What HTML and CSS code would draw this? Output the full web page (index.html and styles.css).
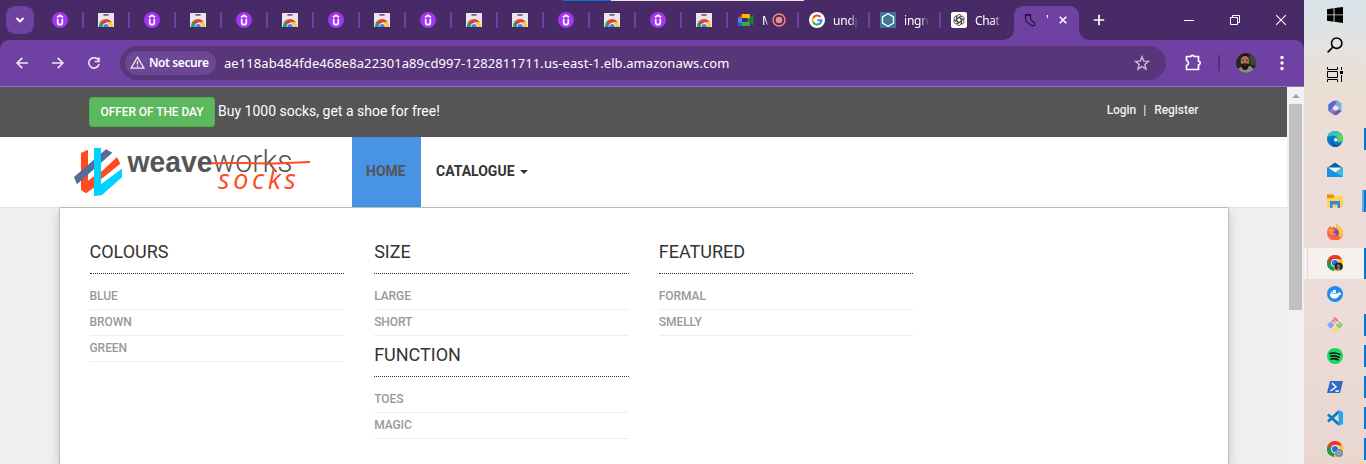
FILE: index.html
```
<!DOCTYPE html>
<html lang="en">
<head>
<meta charset="utf-8">
<title>WeaveSocks</title>
<link rel="stylesheet" href="styles.css">
</head>
<body>
<svg class="defs" width="0" height="0">
  <symbol id="udemy" viewBox="0 0 16 16"><circle cx="8" cy="8" r="8" fill="#a435f0"/><path d="M5 5.200 8 3.200l3 2M5.700 6.800v3.600a2.300 2.300 0 0 0 4.600 0V6.800" fill="none" stroke="#fff" stroke-width="1.700"/></symbol>
  <symbol id="store" viewBox="0 0 16 16"><path d="M0 1h16v14H0z" fill="#e8e8ea"/><path d="M5.500 2.300h5v1.300h-5z" fill="#47306a"/><path d="M1 15q-.2-3.500 2-6l3.500 3-1.500 3z" fill="#1da362"/><path d="M2.500 9.800Q4.500 7 8 7t5.700 3.200H9L5.500 12.500z" fill="#dc4437"/><path d="M9 10.200h5.200q1.200 2 1 4.800H10z" fill="#fcc934"/><path d="M4.600 15a3.500 3.700 0 0 1 7 0z" fill="#fff"/><path d="M5.300 15a2.800 3 0 0 1 5.600 0z" fill="#4285f4"/></symbol>
  <symbol id="chrome" viewBox="0 0 16 16"><circle cx="8" cy="8" r="8" fill="#fbc21c"/><path d="M8 8 7 16A8 8 0 0 1 1 4z" fill="#1d9b50"/><path d="M1 4a8 8 0 0 1 14 .3H8L4.800 9.500z" fill="#e33b2e"/><circle cx="8" cy="8" r="3.900" fill="#fff"/><circle cx="8" cy="8" r="3.100" fill="#1a73e8"/></symbol>
</svg>
<div class="screen">
  <div class="browser">
    <div class="tabstrip">
      <span class="progress"></span>
      <div class="tab-search"><svg width="28" height="28" viewBox="0 0 28 28"><path d="m10.500 12 3.500 3.500 3.500-3.500" fill="none" stroke="#fff" stroke-width="1.900"/></svg></div>
      <div class="tab"><svg width="16" height="16"><use href="#udemy"/></svg></div>
      <div class="tab"><svg width="16" height="16"><use href="#store"/></svg></div>
      <div class="tab"><svg width="16" height="16"><use href="#udemy"/></svg></div>
      <div class="tab"><svg width="16" height="16"><use href="#store"/></svg></div>
      <div class="tab"><svg width="16" height="16"><use href="#udemy"/></svg></div>
      <div class="tab"><svg width="16" height="16"><use href="#store"/></svg></div>
      <div class="tab"><svg width="16" height="16"><use href="#udemy"/></svg></div>
      <div class="tab"><svg width="16" height="16"><use href="#store"/></svg></div>
      <div class="tab"><svg width="16" height="16"><use href="#udemy"/></svg></div>
      <div class="tab"><svg width="16" height="16"><use href="#store"/></svg></div>
      <div class="tab"><svg width="16" height="16"><use href="#store"/></svg></div>
      <div class="tab"><svg width="16" height="16"><use href="#udemy"/></svg></div>
      <div class="tab"><svg width="16" height="16"><use href="#store"/></svg></div>
      <div class="tab"><svg width="16" height="16"><use href="#udemy"/></svg></div>
      <div class="tab"><svg width="16" height="16"><use href="#store"/></svg></div>
      <div class="tab wide">
        <svg width="16" height="16" viewBox="0 0 16 16"><path d="M4 2v4H0z" fill="#ea4335"/><path d="M4 2h7q1 0 1 1v5l-3-2H4z" fill="#fbbc04"/><path d="M0 6h4v5H0z" fill="#4285f4"/><path d="M0 11h4v3H1q-1 0-1-1z" fill="#1967d2"/><path d="M4 10h5l3-3v6q0 1-1 1H4z" fill="#34a853"/><path d="m9 8 5.500-5q1-.5 1 .5v9q0 1-1 .5z" fill="#188038"/></svg>
        <span class="tab-title meet">M</span>
        <svg class="rec" width="14" height="14" viewBox="0 0 14 14"><circle cx="7" cy="7" r="6" fill="none" stroke="#f28b82" stroke-width="1.400"/><circle cx="7" cy="7" r="3.300" fill="#f28b82"/></svg>
      </div>
      <div class="tab wide">
        <svg width="16" height="16" viewBox="0 0 16 16"><circle cx="8" cy="8" r="8" fill="#fff"/><g fill="none" stroke-width="2.100"><path d="M4.200 5.900A4.400 4.400 0 0 1 11.400 5" stroke="#ea4335"/><path d="M4.200 5.800a4.500 4.500 0 0 0 0 4.500" stroke="#fbbc04"/><path d="M4.100 10.100a4.400 4.400 0 0 0 7 1.200" stroke="#34a853"/><path d="M8.200 8.200h4.300a4.600 4.600 0 0 1-1.500 3.200" stroke="#4285f4"/></g></svg>
        <span class="tab-title">undp</span>
      </div>
      <div class="tab wide">
        <svg width="16" height="16" viewBox="0 0 16 16"><path d="M0 0h16v16H0z" fill="#417598"/><path d="m8 1.700 5.500 3.200v6.300L8 14.300l-5.500-3.200V4.900z" fill="none" stroke="#fff" stroke-width="1.300"/></svg>
        <span class="tab-title">ingre</span>
      </div>
      <div class="tab wide last">
        <svg width="16" height="16" viewBox="0 0 16 16"><rect width="16" height="16" rx="2" fill="#fff"/><g fill="none" stroke="#222" stroke-width=".75"><path id="petal" d="M6 9.200V4.700q0-2 2-2.200 1.400 0 2.300 1.100L6.800 5.800"/><use href="#petal" transform="rotate(60 8 8)"/><use href="#petal" transform="rotate(120 8 8)"/><use href="#petal" transform="rotate(180 8 8)"/><use href="#petal" transform="rotate(240 8 8)"/><use href="#petal" transform="rotate(300 8 8)"/></g></svg>
        <span class="tab-title chat">Chat</span>
      </div>
      <div class="tab-active">
        <svg width="16" height="16" viewBox="0 0 16 16"><path d="M3.500 2.500h5v4l.7 1.800 3 2.500q1.200 1.400-.2 2.500-1.500 1-3.300-.3L4.200 9.500l-.6-2z" fill="none" stroke="#27163c" stroke-width="1.200"/><path d="M3.500 3h5" stroke="#27163c" stroke-width="1.800"/></svg>
        <span class="tab-title sliver">'</span>
        <svg class="close" width="8" height="8" viewBox="0 0 8 8"><path d="m.7.7 6.600 6.600M7.300.7.700 7.300" stroke="#fff" stroke-width="1.600"/></svg>
      </div>
      <svg class="new-tab" width="12" height="12" viewBox="0 0 12 12"><path d="M6 .8v10.400M.8 6h10.400" stroke="#fff" stroke-width="1.700"/></svg>
      <div class="window-controls">
        <svg width="10" height="10"><path d="M0 5.500h10" stroke="#fff"/></svg>
        <svg width="10" height="10"><path d="M.5 2.500h7v7h-7zM2.500 2V.5h7v7H8" fill="none" stroke="#fff"/></svg>
        <svg width="10" height="10"><path d="m0 0 10 10M10 0 0 10" stroke="#fff" stroke-width="1.100"/></svg>
      </div>
    </div>
    <div class="toolbar">
      <div class="nav-buttons">
        <svg width="12" height="12" viewBox="0 0 12 12"><path d="M12 6H1.200M6.300.8 1.100 6l5.200 5.200" fill="none" stroke="#eee5f6" stroke-width="1.700"/></svg>
        <svg width="12" height="12" viewBox="0 0 12 12"><path d="M0 6h10.800M5.700.8 10.900 6l-5.200 5.200" fill="none" stroke="#eee5f6" stroke-width="1.700"/></svg>
        <svg width="12" height="12" viewBox="0 0 12 12"><path d="M10.300 2.900A5.200 5.200 0 1 0 11.100 7M11 .2v4.300H6.800" fill="none" stroke="#eee5f6" stroke-width="1.600"/></svg>
      </div>
      <div class="omnibox">
        <div class="chip"><svg width="15" height="13" viewBox="0 0 15 13"><path d="M7.500 1.200 13.900 12.200H1.100z" fill="none" stroke="#eee" stroke-width="1.300"/><path d="M7.500 5v3.500M7.500 9.500V11" stroke="#eee" stroke-width="1.300"/></svg><span>Not secure</span></div>
        <span class="url">ae118ab484fde468e8a22301a89cd997-1282811711.us-east-1.elb.amazonaws.com</span>
        <svg class="star" width="16" height="16" viewBox="0 0 16 16"><path d="m8 1.700 1.700 4.400 4.800.3-3.700 3 1.200 4.700L8 11.500l-4 2.600 1.200-4.700-3.700-3 4.800-.3z" fill="none" stroke="#cbbdd8" stroke-width="1.400"/></svg>
      </div>
      <svg class="puzzle" width="17" height="17" viewBox="0 0 17 17"><path d="M1.500 2.500h4.300q.2-1.200 1.700-1.200t1.700 1.200h4.300v4.700q1.700.2 1.700 1.800t-1.700 1.800v4.700h-12v-4q2-.5 2-2.500t-2-2.500z" fill="none" stroke="#fff" stroke-width="1.700" stroke-linejoin="round"/></svg>
      <span class="divider"></span>
      <svg class="avatar" width="20" height="20" viewBox="0 0 20 20"><clipPath id="round"><circle cx="10" cy="10" r="10"/></clipPath><g clip-path="url(#round)"><path d="M0 0h20v20H0z" fill="#26251f"/><path d="M13 2h7v10h-5z" fill="#3d4933"/><path d="m0 20 3-5 4-2h7l4 3 1 4z" fill="#829181"/><ellipse cx="9" cy="8.500" rx="4.300" ry="6" fill="#a87157"/><path d="M4.700 4Q5.500 1 9 1t4.300 3Q9 2 4.700 4zM5 11q4-1.500 8 0-.5 6-4 6t-4-6z" fill="#20130f"/><path d="M6 7.300h2.300M10 7.300h2.300M7.500 12.300h3" stroke="#4a2c23"/></g></svg>
      <svg class="dots" width="4" height="16"><circle cx="2" cy="2.500" r="1.700" fill="#fff"/><circle cx="2" cy="8" r="1.700" fill="#fff"/><circle cx="2" cy="13.500" r="1.700" fill="#fff"/></svg>
    </div>
    <div class="viewport">
      <div class="page">
        <div class="topbar">
          <div class="offer"><a class="btn">Offer of the day</a><span>Buy 1000 socks, get a shoe for free!</span></div>
          <div class="account"><span>Login</span><span class="bar">|</span><span>Register</span></div>
        </div>
        <div class="navbar">
          <svg class="logo" width="240" height="50" viewBox="0 0 240 50">
            <g transform="translate(0 1) scale(.33333) translate(-222 -204)">
              <path d="m243 219 21-10v93l18-13v34l-24 17-15-10z" fill="#ff4b1f"/>
              <path d="m303 276 48-45 10 20-58 47z" fill="#ff4b1f"/>
              <path d="m222 291 96-83 19 10-106 95z" fill="#566b98"/>
              <path d="M282 204h21v109l63-47v26l-61 54-23 2z" fill="#00d2ff"/>
            </g>
            <text class="weave" x="53.500" y="25" textLength="85" lengthAdjust="spacingAndGlyphs">weave</text>
            <text class="works" x="138.500" y="25" textLength="80" lengthAdjust="spacingAndGlyphs">works</text>
            <path d="m137 16.200 30-.2 33 .5 36-1.500" fill="none" stroke="#ff4b1f" stroke-width="2"/>
            <text class="socks" x="144" y="41.500" textLength="78">socks</text>
          </svg>
          <a class="nav-item home">Home</a>
          <a class="nav-item">Catalogue<span class="caret"></span></a>
        </div>
        <div class="mega">
          <div class="col"><h5>Colours</h5><ul><li>Blue</li><li>Brown</li><li>Green</li></ul></div>
          <div class="col"><h5>Size</h5><ul><li>Large</li><li>Short</li></ul><h5>Function</h5><ul><li>Toes</li><li>Magic</li></ul></div>
          <div class="col"><h5>Featured</h5><ul><li>Formal</li><li>Smelly</li></ul></div>
        </div>
      </div>
      <div class="scrollbar"><span class="up"></span><span class="thumb"></span></div>
    </div>
  </div>
  <div class="taskbar">
    <div class="system"><svg width="16" height="16" viewBox="0 0 16 16"><path d="M0 2.200 6.600 1.200v6.300H0zM7.500 1.100 16 0v7.500H7.500zM0 8.300h6.600v6.400L0 13.700zM7.500 8.300H16V16l-8.500-1.200z"/></svg></div>
    <div class="system"><svg width="16" height="16" viewBox="0 0 16 16"><circle cx="9.700" cy="6.200" r="5.200" fill="none" stroke="#000" stroke-width="1.600"/><path d="m6 10-5.400 5.400" stroke="#000" stroke-width="1.700"/></svg></div>
    <div class="system"><svg width="16" height="16" viewBox="0 0 16 16" fill="none" stroke="#000"><path d="M.5 0v2.500h10V0M.5 4.500h10v6H.5zM.5 15v-2.500h10V15M14.500 0v3M14.500 8v7"/><path d="M13 4h3v3h-3z" fill="#000" stroke="none"/></svg></div>
    <div class="app"><svg width="16" height="16" viewBox="0 0 16 16"><path d="m6 1 4-.5 4.500 3-3 3L8 5 5 9l-3.500 2V4.500z" fill="#6a5fd0"/><path d="m10 .5 4.500 3V11l-3 2.500V6.500L8 5z" fill="#77b2ee"/><path d="m1.500 11 3.500-2 4 2 2.500 2.500-4 2z" fill="#a466c9"/><path d="m9 11 2.500-1.500L14.500 11 10 15 7 14z" fill="#5064ad"/><path d="m1.500 4.500 3-2V9l-3 2z" fill="#3f73d4"/><circle cx="8.300" cy="7.800" r="2.100" fill="#f0e6e4"/></svg></div>
    <div class="app open"><svg width="16" height="16" viewBox="0 0 16 16"><circle cx="8" cy="8" r="8" fill="#0a78ce"/><path d="M.3 6A8 8 0 0 1 16 8c0 3-3.500 4-6 2.500q2-2 0-4.300Q6 2.800.3 6z" fill="#2fc3c1"/><path d="M10.500 1Q16 3 16 8c0 3-3.500 4-6 2.500q2-2 0-4z" fill="#56d657"/><path d="M6.300 7q-2.500 3 .5 6 3.500 2 7.500-.3A8 8 0 0 1 7 16Q2 11 6.300 7z" fill="#124f91"/><circle cx="8.700" cy="8.700" r="1.800" fill="#eaf5f8"/></svg></div>
    <div class="app"><svg width="16" height="16" viewBox="0 0 16 16"><path d="m0 6 8-5.500L16 6v5H0z" fill="#0960a6"/><path d="M1 5.500h14L8 11z" fill="#f6f6f6"/><path d="m0 5.500 8 5 8-5V15H0z" fill="#35bdee"/><path d="m0 5.500 16 9.500H0z" fill="#1595df"/></svg></div>
    <div class="app open stacked"><svg width="16" height="16" viewBox="0 0 16 16"><path d="M0 1.500h6L8 4l-2 2H0z" fill="#dc9707"/><path d="M0 5h6l2-2h8v11H0z" fill="#ffd257"/><path d="M3 8h10v7h-2.500v-3.500h-5V15H3z" fill="#348bd5"/></svg></div>
    <div class="app"><svg width="16" height="16" viewBox="0 0 16 16"><path d="M1.500 4 3 2l1.500 2L6 2.500 9 4q-.5-3 1.500-4 0 2 3 4 3 3.500 2.300 6.500A8 8 0 0 1 0 9q0-3 1.500-5z" fill="#ff643a"/><path d="M10.500 0q0 2 3 4 3 3.500 2.300 6.500-2 3-4.300 2.500 2-4-.5-7-2-2-2-3 0-2 1.500-3z" fill="#ffcd32"/><circle cx="8" cy="8.500" r="3.600" fill="#7548cc"/><path d="M1 6q2-2.500 6-.5l1.500 1.300-3 1q1 2.500 4.500 2-3 3-6 .5T1 6z" fill="#ff923d"/></svg></div>
    <div class="app open current"><svg width="16" height="16" viewBox="0 0 16 16"><use href="#chrome"/><circle cx="11.700" cy="11.500" r="4.100" fill="#25251c"/><path d="M10 9.500h3v4h-3z" fill="#8c624b"/><path d="M9 15q2.500-3 5 0z" fill="#91a28b"/></svg></div>
    <div class="app"><svg width="16" height="16" viewBox="0 0 16 16"><circle cx="8" cy="8" r="8" fill="#218cec"/><path d="M2.800 7.500h8.500q.2-1.500 1-2 1 .7.700 1.800 1-.1 1.500.4-.6 1.200-2.100 1.200Q11 12.500 7 12.500q-4 0-4.200-5zM4 5.700h5V7H4zM6 4h3v1.500H6z" fill="#fff"/></svg></div>
    <div class="app open"><svg width="16" height="16" viewBox="0 0 16 16"><path d="m8 0 3.500 3.500L8 7 4.500 3.500z" fill="#f27275"/><path d="M3.700 4.300 7.300 8l-3.600 3.700L0 8z" fill="#78a9ff"/><path d="M12.300 4.300 16 8l-3.700 3.700L8.700 8z" fill="#89c67a"/><path d="m8 9 3.500 3.500L8 16l-3.500-3.500z" fill="#ffd967"/><path d="m6 1.500 4.500 4.500M8 4v8M9 5l4 3" stroke="#eee0db" stroke-width="1"/></svg></div>
    <div class="app open"><svg width="16" height="16" viewBox="0 0 16 16"><circle cx="8" cy="8" r="8" fill="#1ed760"/><path d="M3 5.500q5-1.500 10 1M3.500 8.300q4.500-1.300 8.500 1M4 11q3.500-1 7 .8" fill="none" stroke="#111" stroke-width="1.600" stroke-linecap="round"/></svg></div>
    <div class="app open"><svg width="16" height="16" viewBox="0 0 16 16"><path d="M3 2h13l-3 12H0z" fill="#3369c5"/><path d="m5 4 4 4-5.500 4M8.500 12H12" fill="none" stroke="#fff" stroke-width="1.500"/></svg></div>
    <div class="app open"><svg width="16" height="16" viewBox="0 0 16 16"><path d="M1 4.500 12 14.500M1 11.500 12 1.500" stroke="#087abf" stroke-width="2.700"/><path d="m11.500 0 4.500 2v12l-4.500 2z" fill="#2aa6ee"/></svg></div>
    <div class="app open"><svg width="16" height="16" viewBox="0 0 16 16"><use href="#chrome"/><circle cx="12" cy="12" r="4" fill="#78909c"/><circle cx="12" cy="12" r="1.800" fill="none" stroke="#a8bac2"/></svg></div>
  </div>
</div>
</body>
</html>
```
FILE: styles.css
```
* { box-sizing: border-box; }
body { margin: 0; overflow: hidden; font-family: Roboto, "Liberation Sans", sans-serif; }
svg { display: block; flex: none; }
.defs { position: absolute; }
.screen { display: flex; width: 1366px; height: 464px; overflow: hidden; }
.browser { width: 1304px; display: flex; flex-direction: column; background: #472a66; }

/* Tab strip */
.tabstrip { position: relative; height: 40px; display: flex; align-items: center; padding-left: 6px; font-family: "Noto Sans", sans-serif; }
.progress { position: absolute; top: 0; left: 563px; width: 241px; height: 1px; background: linear-gradient(90deg, #0078d7 48px, #e6e6e6 48px); }
.tab-search { width: 28px; height: 28px; border-radius: 9px; background: #6f41a2; margin-right: 3px; }
.tab { position: relative; width: 46px; height: 28px; display: flex; align-items: center; padding-left: 15px; flex: none; }
.tab::after { content: ""; position: absolute; right: -1px; top: 6px; width: 2px; height: 16px; background: #6f41a2; }
.tab.wide { width: 71px; padding-left: 11px; }
.tab.last { width: 74px; }
.tab.last::after { display: none; }
.tab-title { width: 25px; margin-left: 8px; margin-top: 2px; font-size: 12px; line-height: 16px; letter-spacing: -.2px; color: #fff; overflow: hidden; white-space: nowrap; -webkit-mask-image: linear-gradient(90deg, #000 65%, transparent); mask-image: linear-gradient(90deg, #000 65%, transparent); }
.tab-title.chat { width: 27px; letter-spacing: -.4px; }
.tab-title.meet { width: 6px; }
.rec { margin-left: 4px; }
.tab-active { position: relative; width: 65px; height: 34px; margin-top: 6px; padding: 0 12px 6px 8px; display: flex; align-items: center; background: #6f41a2; border-radius: 9px 9px 0 0; flex: none; }
.tab-active::before, .tab-active::after { content: ""; position: absolute; bottom: 0; width: 10px; height: 10px; }
.tab-active::before { left: -10px; background: radial-gradient(circle at 0 0, transparent 9.5px, #6f41a2 10px); }
.tab-active::after { right: -10px; background: radial-gradient(circle at 100% 0, transparent 9.5px, #6f41a2 10px); }
.tab-title.sliver { width: 3px; margin-top: 0; }
.close { margin-left: auto; }
.new-tab { margin-left: 14px; }
.window-controls { display: flex; gap: 36px; margin-left: auto; padding-right: 18px; }

/* Toolbar */
.toolbar { height: 47px; display: flex; align-items: center; padding: 0 20px 1px 16px; background: #6f41a2; border-bottom: 1px solid #9170b6; border-radius: 9px 9px 0 0; }
.nav-buttons { display: flex; gap: 24px; margin-right: 20px; }
.omnibox { width: 1046px; height: 34px; border-radius: 17px; background: #57377a; display: flex; align-items: center; padding: 0 16px 0 5px; font-family: "Noto Sans", sans-serif; color: #fff; }
.chip { width: 91px; height: 24px; border-radius: 12px; background: #6d4696; display: flex; align-items: center; gap: 4px; padding-left: 5px; font-size: 12px; font-weight: 600; white-space: nowrap; letter-spacing: -.4px; }
.url { margin-left: 8px; font-size: 13px; letter-spacing: .075px; white-space: nowrap; }
.star { margin-left: auto; }
.puzzle { margin-left: 19px; }
.divider { width: 2px; height: 16px; background: #52307a; margin-left: 16px; }
.avatar { margin-left: 16px; }
.dots { margin-left: auto; }

/* Web page */
.viewport { flex: 1; display: flex; }
.page { width: 1287px; height: 377px; background: #f0f0f0; }
.topbar { height: 50px; padding: 0 88.500px 0 89px; display: flex; justify-content: space-between; background: #555; color: #fff; }
.offer { display: flex; align-items: center; gap: 3px; font-size: 14px; line-height: 20px; white-space: nowrap; }
.offer span { padding-bottom: 2px; }
.btn { width: 126px; height: 30px; line-height: 28px; text-align: center; text-transform: uppercase; font-size: 12px; font-weight: 500; letter-spacing: -.08px; background: #5cb85c; border: 1px solid #4cae4c; border-radius: 3px; }
.account { display: flex; font-size: 12px; font-weight: 500; letter-spacing: -.05px; line-height: 46px; color: #eee; }
.bar { margin: 0 8px 0 7px; }
.navbar { height: 71px; display: flex; padding-left: 74px; background: #fff; border-bottom: 1px solid #e4e4e4; }
.logo { margin: 10px 38px 0 0; }
.weave { font: 700 30px "Liberation Sans", sans-serif; fill: #555; }
.works { font: 300 31px Roboto, sans-serif; fill: #555; }
.socks { font: italic 400 27px "Open Sans", sans-serif; fill: #ff4b1f; }
.nav-item { height: 68px; padding: 0 15px; font-size: 14px; font-weight: 700; color: #333; text-transform: uppercase; white-space: nowrap; display: flex; align-items: center; }
.home { width: 69px; height: 70px; padding: 0 0 2px 14px; background: #4993e4; color: #555; }
.caret { border: 4px solid transparent; border-top-color: #333; border-bottom: 0; margin-left: 5px; margin-top: 2px; }
.mega { position: relative; width: 1170px; height: 259px; margin: -1px 0 0 59px; padding: 25px 30px 0 29.500px; display: grid; grid-template-columns: repeat(4, 1fr); gap: 30px; background: #fff; border: 1px solid #bbb; border-radius: 0 0 4px 4px; box-shadow: 0 6px 12px rgba(0,0,0,.175); }
.col h5 { margin: 0 0 10px; padding: 9px 0 11px; line-height: 20px; font-size: 18px; font-weight: 400; color: #333; text-transform: uppercase; border-bottom: 1px dotted #333; }
.col ul { margin: 0; padding: 0; list-style: none; }
.col li { height: 26px; line-height: 25px; font-size: 12px; font-weight: 500; letter-spacing: -.05px; color: #999; text-transform: uppercase; border-bottom: 1px solid #eee; }
.scrollbar { width: 17px; background: #f1f1f1; display: flex; flex-direction: column; align-items: center; padding-top: 7px; }
.up { border: 4px solid transparent; border-bottom-color: #a3a3a3; border-top: 0; margin-bottom: 6px; }
.thumb { width: 13px; height: 206px; background: #c1c1c1; }

/* Desktop taskbar */
.taskbar { width: 62px; background: linear-gradient(#d8e4ea 0, #e3e3e0 45px, #ebdfd4 90px, #ecdcd9 190px, #ecdcd7 330px, #e8d6cf); }
.system { height: 30px; display: flex; align-items: center; justify-content: center; }
.app { position: relative; height: 31px; display: flex; align-items: center; justify-content: center; padding-bottom: 1px; }
.system + .app { margin-top: 3px; }
.open::after { content: ""; position: absolute; right: 0; top: 4px; width: 2px; height: 22px; background: #0078d7; }
.stacked::after { width: 4px; background: linear-gradient(90deg, #60aee9 2px, #0078d7 2px); }
.current { background: linear-gradient(90deg, #f6f0ee 3px, #e3d8d4 3px 4px, #f6f0ee 4px); }
.current::after { top: 0; height: 31px; }
```
